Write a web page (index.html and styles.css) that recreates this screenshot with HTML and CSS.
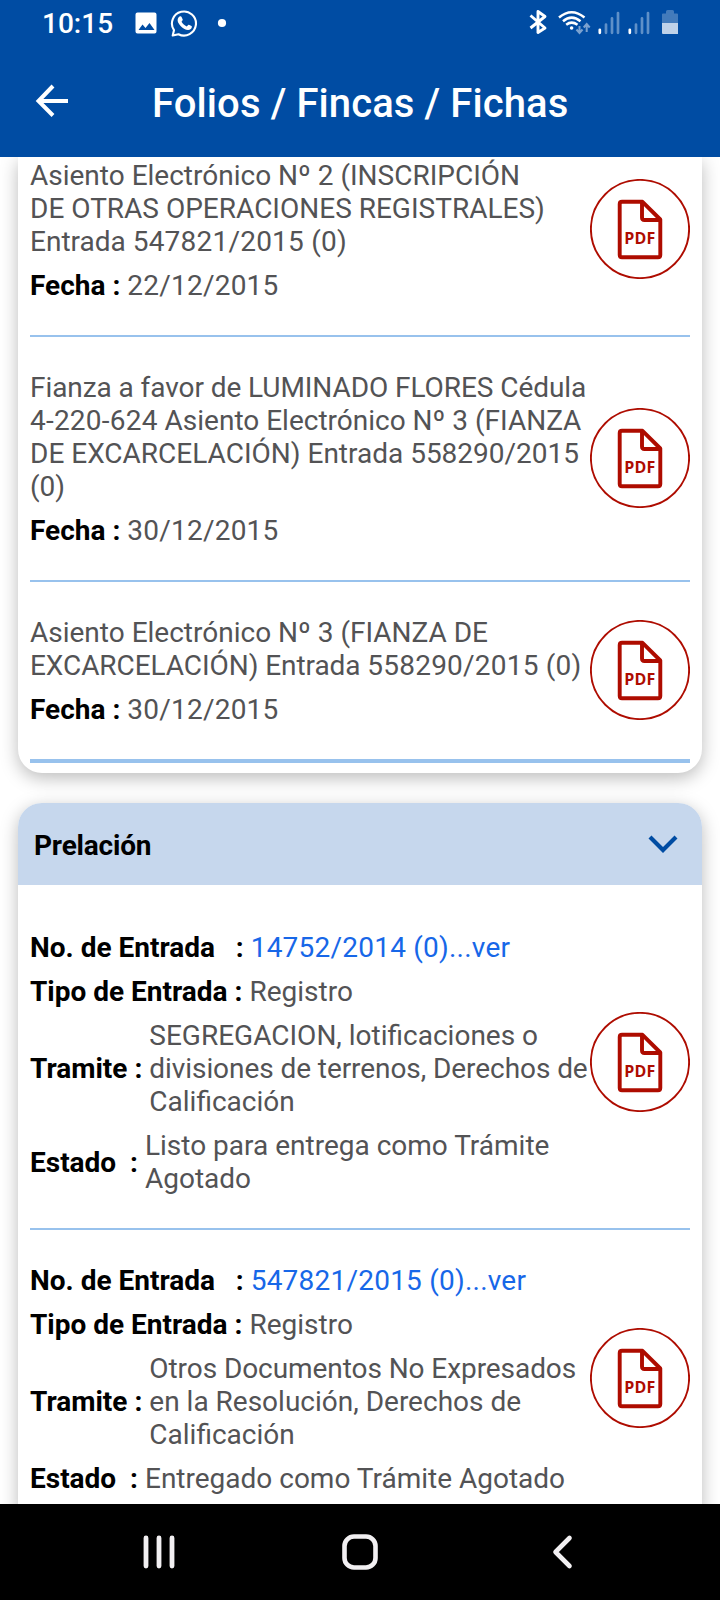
FILE: index.html
```html
<!DOCTYPE html>
<html lang="es">
<head>
<meta charset="utf-8">
<title>Folios / Fincas / Fichas</title>
<link rel="stylesheet" href="styles.css">
</head>
<body>
<svg class="defs" width="0" height="0" aria-hidden="true">
  <symbol id="pdf" viewBox="0 0 100 100">
    <circle cx="50" cy="50" r="49.100" fill="none" stroke="#ae0c00" stroke-width="1.900"/>
    <path d="M52.500 22.800H32Q29.700 22.800 29.700 25V76Q29.700 78.300 32 78.300H68Q70.300 78.300 70.300 76V40.500ZM52 22.800V38.500Q52 41 54.500 41H70.300" fill="none" stroke="#ae0c00" stroke-width="3.900" stroke-linejoin="round"/>
    <text x="34.200" y="65" class="pdf-label" textLength="31">PDF</text>
  </symbol>
</svg>
<header class="top">
  <div class="status">
    <span class="time">10:15</span>
    <svg class="notif" width="94" height="30" viewBox="0 0 94 30">
      <path d="M2.500 2.500h17q2 0 2 2v17q0 2-2 2h-17q-2 0-2-2v-17q0-2 2-2zM3.500 20h16l-5-7-4 5-3-3.500z" fill="#fff" fill-rule="evenodd"/>
      <path d="M37.700 25.500L39 20.200A12 12 0 1 1 43.500 24.200Z" fill="none" stroke="#fff" stroke-width="2.100" stroke-linejoin="round"/>
      <path d="M44.500 6.500c1-.5 1.800-.3 2.200.7l1 2.400c.3.700-.7 1.500-1.200 2.200 1.300 2.300 3 3.700 5.200 4.600.8-.6 1.400-2 2.200-1.700l2.600 1.300c.8.500.3 2.100-.7 3-3 2.500-7.700-.4-10.200-3.100-2.700-2.900-4.500-6.600-1.100-9.400z" fill="#fff"/>
      <circle cx="87" cy="13" r="4.100" fill="#fff"/>
    </svg>
    <svg class="system" width="152" height="30" viewBox="0 0 152 30">
      <path d="M3 7L17.500 19.500 10.500 24V3L17.500 8 3 19.500" transform="translate(-.5 .5)" fill="none" stroke="#fff" stroke-width="2.900" stroke-linejoin="round"/>
      <g fill="none" stroke="#fff" stroke-width="2.500">
        <path d="M31 9.500Q43.600-1 56.500 9.500"/>
        <path d="M35 13.200Q43.600 6 52.500 13.200"/>
        <path d="M38.200 16.700Q43.600 12.500 49.500 16.700"/>
      </g>
      <circle cx="43.600" cy="20" r="1.800" fill="#fff"/>
      <path d="M51.500 18v7M48.500 21.500l3 3.500 3-3.500M58.700 24v-8M55.700 19.500l3-3.500 3 3.500" fill="none" stroke="#7ba2d0" stroke-width="2"/>
      <g fill="none" stroke-width="2.700" stroke-linecap="round">
        <path d="M71.800 21.800v3M101.800 21.800v3" stroke="#fff"/>
        <path d="M78 16.500v8.300M84 10.300v14.500M90 5v19.800M108 16.500v8.300M114 10.300v14.500M120 5v19.800" stroke="#5f90c8"/>
      </g>
      <path d="M134 15.500V6.500q0-1 1-1h3V3.500q0-1.500 1.500-1.500h5q1.500 0 1.500 1.500v2h3q1 0 1 1v9z" fill="#437bbb"/>
      <path d="M134 15h16v11h-15q-1 0-1-1z" fill="#bfd2e9"/>
    </svg>
  </div>
  <div class="appbar">
    <svg class="back" width="34" height="34" viewBox="0 0 34 34"><path d="M18 2L3.500 17 18 31.500M3.500 17H33" fill="none" stroke="#fff" stroke-width="4"/></svg>
    <h1>Folios / Fincas / Fichas</h1>
  </div>
</header>
<main class="content">
  <section class="card card-first">
    <article class="entry">
      <div class="text">
        <p>Asiento Electrónico Nº 2 (INSCRIPCIÓN<br>DE OTRAS OPERACIONES REGISTRALES)<br>Entrada <span class="num">547821/2015 (0)</span></p>
        <div class="field"><b>Fecha :</b><span class="num">22/12/2015</span></div>
      </div>
      <svg class="pdf"><use href="#pdf"/></svg>
    </article>
    <article class="entry">
      <div class="text">
        <p><span class="tight">Fianza a favor de LUMINADO FLORES Cédula</span><br><span class="num">4-220-624</span> Asiento Electrónico Nº 3 (FIANZA<br>DE EXCARCELACIÓN) Entrada 558290/2015<br>(0)</p>
        <div class="field"><b>Fecha :</b><span class="num">30/12/2015</span></div>
      </div>
      <svg class="pdf"><use href="#pdf"/></svg>
    </article>
    <article class="entry last">
      <div class="text">
        <p>Asiento Electrónico Nº 3 (FIANZA DE<br><span class="tight">EXCARCELACIÓN) Entrada </span><span class="num">558290/2015 (0)</span></p>
        <div class="field"><b>Fecha :</b><span class="num">30/12/2015</span></div>
      </div>
      <svg class="pdf"><use href="#pdf"/></svg>
    </article>
  </section>
  <section class="card card-second">
    <div class="card-head">
      <h2>Prelación</h2>
      <svg width="30" height="18" viewBox="0 0 30 18"><path d="M2 2L15 15 28 2" fill="none" stroke="#004ca3" stroke-width="4.200"/></svg>
    </div>
    <article class="entry">
      <div class="text">
        <div class="field"><b>No. de Entrada   :</b><a class="num">14752/2014 (0)...ver</a></div>
        <div class="field"><b>Tipo de Entrada :</b><span>Registro</span></div>
        <div class="field"><b>Tramite :</b><span>SEGREGACION, lotificaciones o<br><span class="tight">divisiones de terrenos, Derechos de</span><br>Calificación</span></div>
        <div class="field"><b>Estado  :</b><span>Listo para entrega como Trámite<br>Agotado</span></div>
      </div>
      <svg class="pdf"><use href="#pdf"/></svg>
    </article>
    <article class="entry">
      <div class="text">
        <div class="field"><b>No. de Entrada   :</b><a class="num">547821/2015 (0)...ver</a></div>
        <div class="field"><b>Tipo de Entrada :</b><span>Registro</span></div>
        <div class="field"><b>Tramite :</b><span><span class="tight">Otros Documentos No Expresados</span><br>en la Resolución, Derechos de<br>Calificación</span></div>
        <div class="field"><b>Estado  :</b><span>Entregado como Trámite Agotado</span></div>
      </div>
      <svg class="pdf"><use href="#pdf"/></svg>
    </article>
  </section>
</main>
<nav class="nav">
  <svg width="36" height="36" viewBox="0 0 36 36"><path d="M5 4v28M18 4v28M31 4v28" stroke="#f2f0f2" stroke-width="4.800" stroke-linecap="round"/></svg>
  <svg width="36" height="36" viewBox="0 0 36 36"><rect x="2.500" y="2.500" width="31" height="31" rx="9.500" fill="none" stroke="#f2f0f2" stroke-width="4.600"/></svg>
  <svg width="36" height="36" viewBox="0 0 36 36"><path d="M26.500 4L12.500 18 26.500 32" fill="none" stroke="#f2f0f2" stroke-width="4.600" stroke-linecap="round" stroke-linejoin="round"/></svg>
</nav>
</body>
</html>
```
FILE: styles.css
```css
* { box-sizing: border-box; }
body {
  margin: 0;
  width: 720px;
  height: 1600px;
  display: flex;
  flex-direction: column;
  overflow: hidden;
  background: #fff;
  color: #535355;
  font-family: Roboto, sans-serif;
  font-size: 28px;
  line-height: 33px;
  white-space: nowrap;
}
h1, h2, p { margin: 0; }
svg { display: block; flex: none; }
.defs { display: none; }

.top { flex: none; height: 157px; background: #004ca3; color: #fff; }
.status { height: 47px; display: flex; align-items: flex-start; padding: 8px 40px 0 42px; }
.time { width: 93px; font-size: 28px; line-height: 32px; font-weight: 500; }
.notif { margin-top: 2px; }
.system { margin-left: auto; }
.appbar { display: flex; align-items: center; height: 110px; padding-left: 35px; padding-top: 4px; }
.back { margin-bottom: 6px; }
h1 { margin-left: 83px; font-size: 40px; line-height: 48px; font-weight: 500; letter-spacing: .1px; }

.content { flex: 1; min-height: 0; overflow: hidden; padding: 0 18px; }
.card { background: #fff; border-radius: 24px; box-shadow: 0 5px 18px rgba(0, 0, 0, .27); }
.card-first { border-radius: 0 0 24px 24px; padding-bottom: 10px; }
.card-second { margin-top: 30px; }
.card-head {
  height: 82px;
  display: flex;
  align-items: center;
  justify-content: space-between;
  padding: 2px 24px 0 16px;
  border-radius: 24px 24px 0 0;
  background: #c6d7ed;
}
.card-head svg { margin-bottom: 2px; }
h2 { font-size: 28px; line-height: 33px; font-weight: 700; letter-spacing: -.2px; color: #000; }

.entry {
  display: flex;
  align-items: center;
  margin: 0 12px;
  padding: 34px 0 33px;
  border-bottom: 2px solid #98c2ed;
}
.card-first .entry:first-child { padding-top: 2px; }
.card-second .card-head + .entry { padding-top: 46px; }
.entry.last { border-bottom-width: 4px; }
.text { width: 560px; flex: none; display: flex; flex-direction: column; gap: 11px; }
.field { display: flex; align-items: center; gap: 7px; }
b { font-weight: 700; color: #000; white-space: pre; }
a { color: #1767e8; }
.num { letter-spacing: .22px; }
.tight { letter-spacing: -.07px; }
.pdf { width: 100px; height: 100px; margin-bottom: 3px; }
.pdf-label { font: 700 16px "Open Sans", sans-serif; fill: #ae0c00; }

.nav {
  flex: none;
  height: 96px;
  display: flex;
  align-items: center;
  justify-content: space-between;
  padding: 0 141px;
  background: #000;
}
```
